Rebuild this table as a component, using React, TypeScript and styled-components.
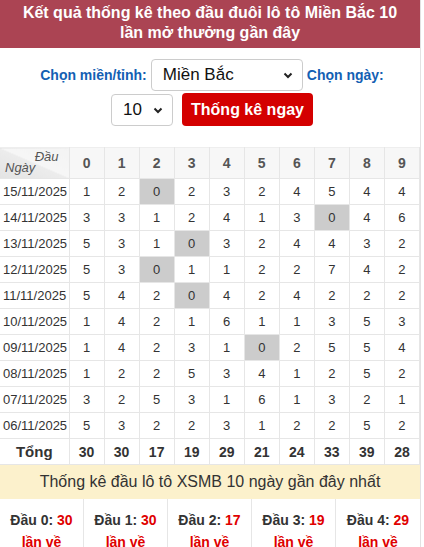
import React from "react";
import styled, { createGlobalStyle } from "styled-components";

const Global = createGlobalStyle`
  html, body { margin: 0; padding: 0; background: #fff; }
  body { font-family: "Liberation Sans", Arial, sans-serif; color: #333; }
`;

const Wrap = styled.div`
  width: 420px;
  border-right: 1px solid #e2e2e2;
  overflow: hidden;
`;

const Title = styled.h1`
  margin: 0;
  height: 48px;
  box-sizing: border-box;
  padding: 3px 10px 0;
  background: #ab4453;
  color: #fff;
  font-size: 16px;
  line-height: 20px;
  font-weight: bold;
  text-align: center;
`;

const Form = styled.div`
  display: flex;
  flex-wrap: wrap;
  justify-content: center;
  align-items: center;
  align-content: flex-start;
  gap: 2px 4px;
  padding: 11px 30px 0 34px;
  height: 99px;
  box-sizing: border-box;
`;

const Label = styled.label`
  color: #1360b3;
  font-weight: bold;
  font-size: 14px;
`;

const Select = styled.div<{ $w: number }>`
  width: ${(p) => p.$w}px;
  height: 32px;
  box-sizing: border-box;
  border: 1px solid #ccc;
  border-radius: 4px;
  display: flex;
  align-items: center;
  justify-content: space-between;
  padding: 0 8px 0 11px;
  font-size: 17px;
  color: #111;
  background: #fff;
`;

const Btn = styled.button`
  height: 33px;
  margin-left: 5px;
  padding: 0 9px;
  border: none;
  border-radius: 4px;
  background: #d40000;
  color: #fff;
  font-family: "Liberation Sans", Arial, sans-serif;
  font-weight: bold;
  font-size: 16px;
`;

const Table = styled.table`
  border-collapse: collapse;
  width: 420px;
  table-layout: fixed;
  font-size: 13px;
  border-top: 1px solid #eee;
`;

const Th = styled.th`
  height: 30px;
  background: #f7f7f7;
  color: #555;
  font-weight: bold;
  font-size: 14px;
  padding: 0;
  border: 1px solid #e6e6e6;
  border-top: none;
`;

const Corner = styled.th`
  height: 30px;
  padding: 0;
  position: relative;
  font-weight: normal;
  font-style: italic;
  color: #555;
  font-size: 13px;
  background: linear-gradient(to top right, #e3e3e3 0%, #ececec 50%, #f6f6f6 51%, #f3f3f3 100%);
  border-right: 1px solid #e6e6e6;
`;

const CornerTop = styled.span`
  position: absolute;
  right: 10px;
  top: 1px;
`;
const CornerBot = styled.span`
  position: absolute;
  left: 5px;
  bottom: 3px;
`;

const Td = styled.td<{ $zero?: boolean }>`
  height: 25px;
  padding: 0;
  text-align: center;
  border: 1px solid #e6e6e6;
  color: #333;
  background: ${(p) => (p.$zero ? "#cccccc" : "#fff")};
`;

const DateTd = styled.td`
  height: 25px;
  padding: 0 0 0 3px;
  font-size: 13px;
  color: #333;
  border: 1px solid #e6e6e6;
  border-left: none;
  white-space: nowrap;
`;

const TotalTd = styled.td`
  height: 25px;
  padding: 0;
  text-align: center;
  font-weight: bold;
  color: #333;
  border: 1px solid #e6e6e6;
  font-size: 14px;
`;

const TotalLabel = styled(TotalTd)`
  font-size: 15px;
  border-left: none;
`;

const Band = styled.div`
  height: 34px;
  background: #fcf1cc;
  display: flex;
  align-items: center;
  justify-content: center;
  font-size: 16px;
  color: #333;
`;

const Stats = styled.div`
  display: grid;
  grid-template-columns: repeat(5, 1fr);
`;

const Stat = styled.div`
  border-right: 1px solid #e6e6e6;
  text-align: center;
  font-weight: bold;
  font-size: 14px;
  line-height: 22px;
  padding-top: 10px;
  color: #333;
  &:last-child { border-right: none; }
`;

const Red = styled.span`
  color: #e00000;
`;

const rows: [string, number[]][] = [
  ["15/11/2025", [1, 2, 0, 2, 3, 2, 4, 5, 4, 4]],
  ["14/11/2025", [3, 3, 1, 2, 4, 1, 3, 0, 4, 6]],
  ["13/11/2025", [5, 3, 1, 0, 3, 2, 4, 4, 3, 2]],
  ["12/11/2025", [5, 3, 0, 1, 1, 2, 2, 7, 4, 2]],
  ["11/11/2025", [5, 4, 2, 0, 4, 2, 4, 2, 2, 2]],
  ["10/11/2025", [1, 4, 2, 1, 6, 1, 1, 3, 5, 3]],
  ["09/11/2025", [1, 4, 2, 3, 1, 0, 2, 5, 5, 4]],
  ["08/11/2025", [1, 2, 2, 5, 3, 4, 1, 2, 5, 2]],
  ["07/11/2025", [3, 2, 5, 3, 1, 6, 1, 3, 2, 1]],
  ["06/11/2025", [5, 3, 2, 2, 3, 1, 2, 2, 5, 2]],
];
const totals = [30, 30, 17, 19, 29, 21, 24, 33, 39, 28];

const Chevron = () => (
  <svg width="12" height="12" viewBox="0 0 12 12">
    <path d="M2.5 4.5 L6 8 L9.5 4.5" fill="none" stroke="#222" strokeWidth="2" />
  </svg>
);

export default function App() {
  return (
    <Wrap>
      <Global />
      <Title>Kết quả thống kê theo đầu đuôi lô tô Miền Bắc 10 lần mở thưởng gần đây</Title>
      <Form>
        <Label>Chọn miền/tỉnh:</Label>
        <Select $w={152}>
          <span>Miền Bắc</span>
          <Chevron />
        </Select>
        <Label>Chọn ngày:</Label>
        <Select $w={62}>
          <span>10</span>
          <Chevron />
        </Select>
        <Btn>Thống kê ngay</Btn>
      </Form>
      <Table>
        <colgroup>
          <col style={{ width: 69 }} />
          {totals.map((_, i) => (
            <col key={i} style={{ width: 35 }} />
          ))}
        </colgroup>
        <thead>
          <tr>
            <Corner>
              <CornerTop>Đầu</CornerTop>
              <CornerBot>Ngày</CornerBot>
            </Corner>
            {totals.map((_, i) => (
              <Th key={i}>{i}</Th>
            ))}
          </tr>
        </thead>
        <tbody>
          {rows.map(([d, vals]) => (
            <tr key={d}>
              <DateTd>{d}</DateTd>
              {vals.map((v, i) => (
                <Td key={i} $zero={v === 0}>{v}</Td>
              ))}
            </tr>
          ))}
          <tr>
            <TotalLabel>Tổng</TotalLabel>
            {totals.map((t, i) => (
              <TotalTd key={i}>{t}</TotalTd>
            ))}
          </tr>
        </tbody>
      </Table>
      <Band>Thống kê đầu lô tô XSMB 10 ngày gần đây nhất</Band>
      <Stats>
        {totals.slice(0, 5).map((t, i) => (
          <Stat key={i}>
            Đầu {i}: <Red>{t}</Red>
            <br />
            <Red>lần về</Red>
          </Stat>
        ))}
      </Stats>
    </Wrap>
  );
}
